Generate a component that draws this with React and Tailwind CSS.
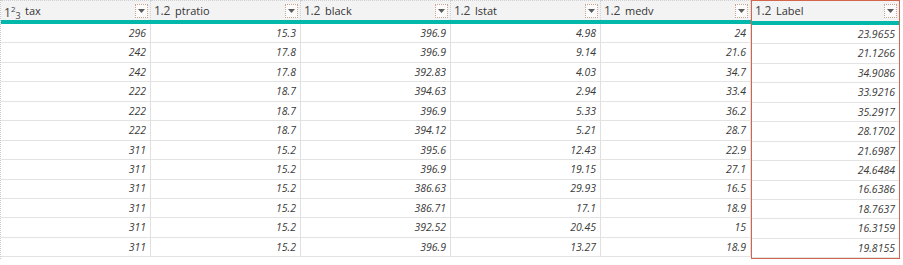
import React from "react";

const cols = [
  { name: "tax", type: "int", vals: ["296","242","242","222","222","222","311","311","311","311","311","311"] },
  { name: "ptratio", type: "dec", vals: ["15.3","17.8","17.8","18.7","18.7","18.7","15.2","15.2","15.2","15.2","15.2","15.2"] },
  { name: "black", type: "dec", vals: ["396.9","396.9","392.83","394.63","396.9","394.12","395.6","396.9","386.63","386.71","392.52","396.9"] },
  { name: "lstat", type: "dec", vals: ["4.98","9.14","4.03","2.94","5.33","5.21","12.43","19.15","29.93","17.1","20.45","13.27"] },
  { name: "medv", type: "dec", vals: ["24","21.6","34.7","33.4","36.2","28.7","22.9","27.1","16.5","18.9","15","18.9"] },
  { name: "Label", type: "dec", vals: ["23.9655","21.1266","34.9086","33.9216","35.2917","28.1702","21.6987","24.6484","16.6386","18.7637","16.3159","19.8155"] },
];

function TypeIcon({ type }) {
  if (type === "int") {
    return (
      <span className="flex items-start w-[18px] text-[#444] leading-none">
        <span className="text-[12px] mt-[4px]">1</span>
        <span className="text-[8px] mt-[2px]">2</span>
        <span className="text-[9px] mt-[8px]">3</span>
      </span>
    );
  }
  return <span className="w-[18px] text-[12px] text-[#444] leading-none tracking-[-0.3px]">1.2</span>;
}

function Dropdown() {
  return (
    <div className="w-[13px] h-[14px] mt-[3px] border border-dotted border-[#c9a58f] bg-[#fbfbfb] flex items-center justify-center">
      <svg width="7" height="4" viewBox="0 0 7 4"><path d="M0 0 L7 0 L3.5 4 Z" fill="#5a5a5a" /></svg>
    </div>
  );
}

export default function App() {
  return (
    <div className="w-[903px] h-[265px] bg-white overflow-hidden" style={{ fontFamily: '"Open Sans", "Noto Sans", sans-serif' }}>
      <div className="flex border-l border-dotted border-[#c8c8c8]">
        {cols.map((c, ci) => {
          const last = ci === cols.length - 1;
          return (
            <div
              key={c.name}
              className={
                last
                  ? "w-[149px] flex flex-col border border-[#d4654d] box-border"
                  : "w-[150px] flex flex-col"
              }
            >
              <div
                className={
                  "h-[20px] bg-[#f3f3f3] flex items-start pl-[3px] pr-[2px] " +
                  (last ? "" : "border-t border-dotted border-[#d0d0d0] border-r")
                }
              >
                <div className="flex items-center h-[20px]">
                  <TypeIcon type={c.type} />
                  <span className="ml-[3px] text-[11px] text-[#333]">{c.name}</span>
                </div>
                <div className="flex-1" />
                <Dropdown />
              </div>
              <div className="h-[4px] bg-[#01b8aa]" />
              {c.vals.map((v, i) => (
                <div
                  key={i}
                  className={
                    "h-[19.45px] box-border border-b border-[#e3e3e3] flex items-center justify-end pr-[4px] " +
                    (last ? "" : "border-r border-r-[#e0e0e0]")
                  }
                >
                  <span className="text-[10.5px] italic text-[#3a3a3a] leading-none">{v}</span>
                </div>
              ))}
            </div>
          );
        })}
      </div>
    </div>
  );
}
